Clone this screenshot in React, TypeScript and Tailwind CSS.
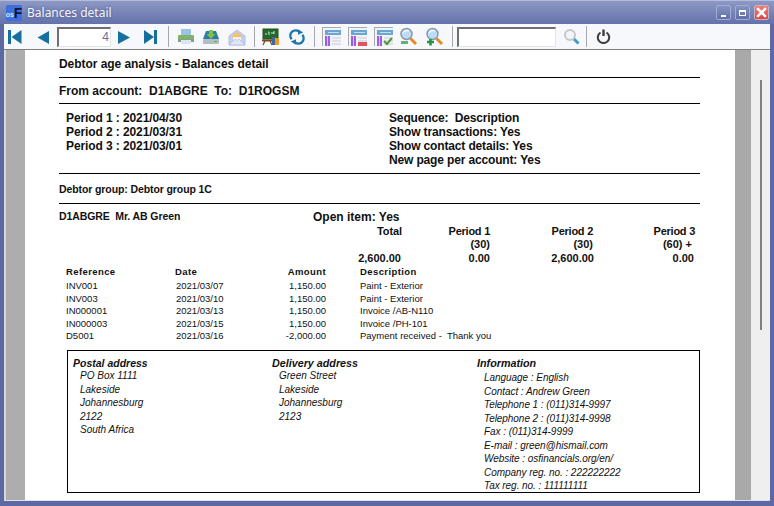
const TX = [
  { ref: "INV001", date: "2021/03/07", amount: "1,150.00", desc: "Paint - Exterior" },
  { ref: "INV003", date: "2021/03/10", amount: "1,150.00", desc: "Paint - Exterior" },
  { ref: "IN000001", date: "2021/03/13", amount: "1,150.00", desc: "Invoice /AB-N110" },
  { ref: "IN000003", date: "2021/03/15", amount: "1,150.00", desc: "Invoice /PH-101" },
  { ref: "D5001", date: "2021/03/16", amount: "-2,000.00", desc: "Payment received -  Thank you" },
];

const POSTAL = ["PO Box 1111", "Lakeside", "Johannesburg", "2122", "South Africa"];
const DELIVERY = ["Green Street", "Lakeside", "Johannesburg", "2123"];
const INFO = [
  "Language : English",
  "Contact : Andrew Green",
  "Telephone 1 : (011)314-9997",
  "Telephone 2 : (011)314-9998",
  "Fax : (011)314-9999",
  "E-mail : green@hismail.com",
  "Website : osfinancials.org/en/",
  "Company reg. no. : 222222222",
  "Tax reg. no. : 111111111",
];

function Sep() {
  return <div className="w-[1px] h-[21px] bg-[#a8a8a8] shrink-0" />;
}

function Slot({ w, children }: { w: number; children?: React.ReactNode }) {
  return (
    <div className="flex items-center justify-center shrink-0 h-full" style={{ width: w }}>
      {children}
    </div>
  );
}

function Nav({ kind }: { kind: "first" | "prev" | "next" | "last" }) {
  const c = "#15709f";
  return (
    <svg width="16" height="16" viewBox="0 0 16 16">
      {kind === "first" && (<><rect x="1" y="1" width="3" height="14" fill={c} /><path d="M14.5 1v14L4.5 8z" fill={c} /></>)}
      {kind === "prev" && <path d="M14 2v13L2.5 8.5z" fill={c} />}
      {kind === "next" && <path d="M2 2v13l12-6.500z" fill={c} />}
      {kind === "last" && (<><rect x="12" y="1" width="3" height="14" fill={c} /><path d="M2 1v14l10-7z" fill={c} /></>)}
    </svg>
  );
}

function Printer() {
  return (
    <svg width="18" height="18" viewBox="0 0 18 18">
      <rect x="4" y="1" width="10" height="7" fill="#9cc3e6" />
      <rect x="1" y="7" width="16" height="5" rx="1" fill="#7fb56a" />
      <rect x="1" y="11" width="16" height="3" fill="#8a9a8c" />
      <rect x="4" y="12" width="10" height="4" fill="#dbe6ee" />
    </svg>
  );
}

function Download() {
  return (
    <svg width="18" height="18" viewBox="0 0 18 18">
      <path d="M1 11 4 3h10l3 8z" fill="#2c7ea8" />
      <rect x="1" y="11" width="16" height="5" rx="1" fill="#b5bdc4" />
      <rect x="12" y="13" width="3" height="1" fill="#5fae45" />
      <path d="M7 2h4v4h2.500L9 11 4.500 6H7z" fill="#7fc241" />
    </svg>
  );
}

function Mail() {
  return (
    <svg width="18" height="18" viewBox="0 0 18 18">
      <path d="M1 8 9 2l8 6v9H1z" fill="#c4cff0" stroke="#a9b4dc" strokeWidth="0.800" />
      <path d="M4 8 9 4l5 4v2H4z" fill="#f3c26f" />
      <path d="M5 9h8v3l-4 2-4-2z" fill="#fbf3e2" />
      <path d="M1 17 7 11l2 1.500 2-1.500 6 6z" fill="#dfe5f8" stroke="#a9b4dc" strokeWidth="0.600" />
    </svg>
  );
}

function Board() {
  return (
    <svg width="18" height="18" viewBox="0 0 18 18">
      <rect x="1" y="1" width="15" height="10" fill="#1e6b2c" stroke="#2e4d20" />
      <path d="M3 6h2M6 4h1v3M9 5h3M12 3v3" stroke="#d6ead0" strokeWidth="1" fill="none" />
      <path d="M0 12h12l-1 1H1zM3 13 1 17M8 13l2 4" stroke="#7b4a1e" strokeWidth="1.200" fill="#7b4a1e" />
      <rect x="12" y="10" width="5" height="7" fill="#e89a26" />
      <rect x="10" y="9" width="3" height="8" fill="#44649c" />
    </svg>
  );
}

function Refresh() {
  return (
    <svg width="16" height="16" viewBox="0 0 18 18" fill="none">
      <path d="M3 11.500A6 6 0 0 1 12 3.500" stroke="#1c76ab" strokeWidth="2.600" />
      <path d="M10.500 0.500 16 4l-6 2.500z" fill="#1c76ab" />
      <path d="M15 6.500A6 6 0 0 1 6 14.500" stroke="#1c76ab" strokeWidth="2.600" />
      <path d="M7.500 17.500 2 14l6-2.500z" fill="#1c76ab" />
    </svg>
  );
}

function View({ mark }: { mark?: "red" | "check" }) {
  return (
    <svg width="19" height="19" viewBox="0 0 19 19">
      <rect x="0" y="0" width="19" height="19" fill="#f2f3f6" />
      <path d="M0 19V0h19v1H1v18z" fill="#aaaaaa" />
      <rect x="3" y="3" width="16" height="5" fill="#68a6d4" />
      <rect x="6" y="5" width="11" height="1" fill="#c9dff0" />
      <rect x="3" y="9" width="5" height="10" fill="#9a5fe6" />
      <rect x="5" y="9" width="1" height="10" fill="#d8c4f6" />
      <rect x="10" y="10" width="9" height="2" fill="#dde0e6" />
      <rect x="10" y="13" width="9" height="2" fill="#dde0e6" />
      <rect x="10" y="16" width="9" height="2" fill="#dde0e6" />
      {mark === "red" && <rect x="10" y="15" width="9" height="4" fill="#e0555f" />}
      {mark === "check" && <path d="M10 14l3 3 5-6" fill="none" stroke="#4f9a3e" strokeWidth="2" />}
    </svg>
  );
}

function Lens({ mark }: { mark: "minus" | "plus" }) {
  return (
    <svg width="19" height="19" viewBox="0 0 19 19">
      <path d="M11.500 11.500 17 17" stroke="#e58a24" strokeWidth="3" />
      <circle cx="7.500" cy="7" r="5.500" fill="#bcdcf6" stroke="#8e9aa6" strokeWidth="1.500" />
      <path d="M4 6a4 3 0 0 1 6-2" stroke="#ffffff" strokeWidth="1.200" fill="none" />
      {mark === "minus" && <rect x="2" y="14" width="7" height="3" fill="#62b277" />}
      {mark === "plus" && <path d="M2 15h7M5.500 12v6.500" stroke="#23944a" strokeWidth="2.600" />}
    </svg>
  );
}

function Search() {
  return (
    <svg width="17" height="17" viewBox="0 0 17 17">
      <path d="M10.500 10.500 15.500 15.500" stroke="#3b9cc8" strokeWidth="3" />
      <circle cx="7" cy="7" r="5" fill="#f4f5f7" stroke="#c4c8cc" strokeWidth="2" />
    </svg>
  );
}

function Power() {
  return (
    <svg width="15" height="15" viewBox="0 0 15 15" fill="none">
      <path d="M4.500 3.500A5.700 5.700 0 1 0 10.500 3.500" stroke="#3c3c3c" strokeWidth="2" />
      <path d="M7.500 0.500v6.500" stroke="#3c3c3c" strokeWidth="2.400" />
    </svg>
  );
}

function AppIcon() {
  return (
    <div className="w-[16px] h-[16px] rounded-[2px] bg-[#3d6fe0] flex items-end justify-center overflow-hidden">
      <span className="text-[7px] leading-[12px] font-bold text-[#dfe8ff]">os</span>
      <span className="text-[14px] leading-[15px] font-bold text-[#14143c]">F</span>
    </div>
  );
}

function WinBtn({ children, close }: { children: React.ReactNode; close?: boolean }) {
  return (
    <div
      className={`w-[15.5px] h-[15px] rounded-[2px] border flex items-center justify-center ${
        close
          ? "border-[#c9b3c4] bg-gradient-to-b from-[#ef7f78] to-[#e0403c]"
          : "border-[#a3acd2] bg-gradient-to-b from-[#8793c1] to-[#616fa8]"
      }`}
    >
      {children}
    </div>
  );
}

function Rule() {
  return <div className="h-[1px] w-[641px] bg-black shrink-0" />;
}

export default function App() {
  return (
    <div className="w-[774px] h-[506px] flex flex-col overflow-hidden bg-[#5c69a3] font-['Liberation_Sans',Arial,sans-serif] text-[#111]">
      {/* Title bar */}
      <div className="h-[24px] shrink-0 flex items-center pl-[6px] pr-[5px] border-t border-[#b4bcdc] bg-gradient-to-b from-[#8d98c4] to-[#6472aa]">
        <AppIcon />
        <span className="ml-[5px] text-[12px] text-[#f4f5fb] font-['Noto_Sans',sans-serif] [text-shadow:0_0_3px_#4a5590]">Balances detail</span>
        <div className="ml-auto flex gap-[3.500px]">
          <WinBtn>
            <div className="w-[5px] h-[2px] bg-white mt-[6px]" />
          </WinBtn>
          <WinBtn>
            <div className="w-[7px] h-[6px] border border-white border-t-2" />
          </WinBtn>
          <WinBtn close>
            <svg width="11" height="11" viewBox="0 0 10 10">
              <path d="M1 1l8 8M9 1 1 9" stroke="#ffffff" strokeWidth="2.400" />
            </svg>
          </WinBtn>
        </div>
      </div>

      {/* Toolbar */}
      <div className="h-[26px] shrink-0 mx-[4px] flex items-center bg-[#f7f8fb] border-b border-[#7f7f7f]">
        <Slot w={22}><Nav kind="first" /></Slot>
        <Slot w={6} />
        <Slot w={22}><Nav kind="prev" /></Slot>
        <div className="w-[54px] h-[20px] shrink-0 ml-[3px] border-2 border-r border-b border-t-[#707070] border-l-[#707070] border-r-[#e4e4e4] border-b-[#e4e4e4] bg-white text-right pr-[1px] text-[12px] leading-[17px] text-[#6a6f9a]">4</div>
        <Slot w={26}><Nav kind="next" /></Slot>
        <Slot w={26}><Nav kind="last" /></Slot>
        <Slot w={5} />
        <Sep />
        <Slot w={4} />
        <Slot w={25}><Printer /></Slot>
        <Slot w={26}><Download /></Slot>
        <Slot w={26}><Mail /></Slot>
        <Slot w={4} />
        <Sep />
        <Slot w={3} />
        <Slot w={26}><Board /></Slot>
        <Slot w={25}><Refresh /></Slot>
        <Slot w={5} />
        <Sep />
        <Slot w={3} />
        <Slot w={26}><View /></Slot>
        <Slot w={26}><View mark="red" /></Slot>
        <Slot w={26}><View mark="check" /></Slot>
        <Slot w={25}><Lens mark="minus" /></Slot>
        <Slot w={26}><Lens mark="plus" /></Slot>
        <Slot w={5} />
        <Sep />
        <div className="w-[99px] h-[20px] shrink-0 ml-[4px] border-2 border-r border-b border-t-[#707070] border-l-[#707070] border-r-[#e4e4e4] border-b-[#e4e4e4] bg-white" />
        <Slot w={30}><Search /></Slot>
        <Sep />
        <Slot w={32}><Power /></Slot>
      </div>

      {/* Preview area */}
      <div className="h-[450px] shrink-0 mx-[4px] flex bg-[#efefef]">
        <div className="w-[2px] bg-[#d8d8d8]" />
        <div className="w-[19px] bg-[#adadad]" />
        <div className="w-[710px] bg-white pl-[34px] flex flex-col overflow-hidden">
          <div className="h-[27px] shrink-0 flex items-center text-[12px] font-bold tracking-[-0.05px]">Debtor age analysis - Balances detail</div>
          <Rule />
          <div className="h-[25px] shrink-0 flex items-center text-[12px] font-bold whitespace-pre">From account:  D1ABGRE  To:  D1ROGSM</div>
          <Rule />
          <div className="h-[69px] shrink-0 pt-[7px] flex text-[12px] leading-[14px] font-bold">
            <div className="w-[330px] pl-[7px] tracking-[-0.1px]">
              <div>Period 1 : 2021/04/30</div>
              <div>Period 2 : 2021/03/31</div>
              <div>Period 3 : 2021/03/01</div>
            </div>
            <div className="whitespace-pre tracking-[-0.15px]">
              <div>Sequence:  Description</div>
              <div>Show transactions: Yes</div>
              <div>Show contact details: Yes</div>
              <div>New page per account: Yes</div>
            </div>
          </div>
          <Rule />
          <div className="h-[29px] shrink-0 pt-[3px] flex items-center text-[10.500px] font-bold tracking-[-0.1px]">Debtor group: Debtor group 1C</div>
          <Rule />
          <div className="h-[20px] shrink-0 pt-[6px] flex items-center">
            <span className="w-[254px] text-[10.500px] font-bold whitespace-pre tracking-[-0.1px]">D1ABGRE  Mr. AB Green</span>
            <span className="text-[12px] font-bold">Open item: Yes</span>
          </div>
          <div className="grid grid-cols-[343px_88px_103px_102px] text-right text-[11px] font-bold">
            <div className="h-[14px] leading-[14px] tracking-[-0.1px]">Total</div>
            <div className="h-[14px] leading-[14px] tracking-[-0.25px]">Period 1</div>
            <div className="h-[14px] leading-[14px] tracking-[-0.25px]">Period 2</div>
            <div className="h-[14px] leading-[14px] tracking-[-0.25px]">Period 3</div>
            <div className="h-[13px] leading-[13px]" />
            <div className="h-[13px] leading-[13px]">(30)</div>
            <div className="h-[13px] leading-[13px]">(30)</div>
            <div className="h-[13px] leading-[13px] pr-[3px]">(60) +</div>
            <div className="h-[14px] leading-[14px] pr-[1px]">2,600.00</div>
            <div className="h-[14px] leading-[14px]">0.00</div>
            <div className="h-[14px] leading-[14px] -mr-[1px]">2,600.00</div>
            <div className="h-[14px] leading-[14px] pr-[1px]">0.00</div>
          </div>
          <div className="grid grid-cols-[109px_103px_48px_auto] pl-[7px] h-[13px] mb-[2px] items-center text-[9.500px] font-bold tracking-[0.4px]">
            <div>Reference</div>
            <div>Date</div>
            <div className="text-right">Amount</div>
            <div className="pl-[34px]">Description</div>
          </div>
          <div className="flex flex-col text-[9.500px]">
            {TX.map((t) => (
              <div key={t.ref} className="grid grid-cols-[110px_100px_50px_auto] pl-[7px] h-[12.500px] leading-[12.500px]">
                <div>{t.ref}</div>
                <div>{t.date}</div>
                <div className="text-right">{t.amount}</div>
                <div className="pl-[34px] whitespace-pre">{t.desc}</div>
              </div>
            ))}
          </div>
          <div className="mt-[7.500px] ml-[8px] w-[633px] h-[143px] shrink-0 border border-black grid grid-cols-[199px_205px_auto] pl-[5px] pt-[6px] italic">
            <div>
              <div className="h-[12px] leading-[12px] text-[10.500px] font-bold">Postal address</div>
              <div className="pl-[7px] text-[10px] leading-[13.500px]">
                {POSTAL.map((l) => <div key={l}>{l}</div>)}
              </div>
            </div>
            <div>
              <div className="h-[12px] leading-[12px] text-[10.750px] font-bold">Delivery address</div>
              <div className="pl-[7px] text-[10px] leading-[13.500px]">
                {DELIVERY.map((l) => <div key={l}>{l}</div>)}
              </div>
            </div>
            <div>
              <div className="h-[14px] leading-[12px] text-[10.750px] font-bold">Information</div>
              <div className="pl-[7px] text-[10px] tracking-[-0.05px] leading-[13.500px]">
                {INFO.map((l) => <div key={l}>{l}</div>)}
              </div>
            </div>
          </div>
        </div>
        <div className="w-[16px] bg-[#a9a9a9]" />
        <div className="w-[19px] flex justify-center pt-[30px]">
          <div className="w-[2px] h-[250px] bg-[#808080]" />
        </div>
      </div>
      <div className="h-[1px] mx-[4px] bg-[#dcdfee] shrink-0" />
    </div>
  );
}
